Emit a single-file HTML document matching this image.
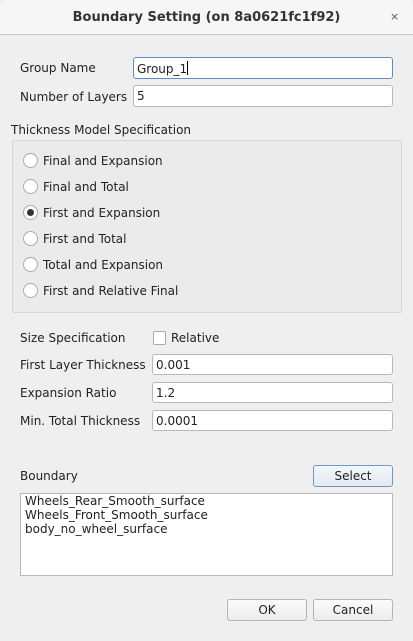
<!DOCTYPE html>
<html><head><style>
*{box-sizing:border-box;margin:0;padding:0}
body{width:413px;height:641px;background:#efefef;font-family:"DejaVu Sans",sans-serif;font-size:12px;color:#222;position:relative;overflow:hidden}
.a{position:absolute;white-space:nowrap}
.tb{position:absolute;left:0;top:0;width:413px;height:35px;background:#f6f6f6;border-bottom:1px solid #c8c8c8;border-radius:6px 6px 0 0}
.in{position:absolute;background:#fff;border:1px solid #b8b8b8;border-radius:3px;padding:3px 3px 1px;line-height:15px}
.rb{position:absolute;left:23px;width:15px;height:15px;border:1px solid #aaa;border-radius:50%;background:#fff}
.bt{position:absolute;border:1px solid #b4b4b4;border-radius:3px;background:linear-gradient(#fbfbfb,#ececec);text-align:center;line-height:21px}
</style></head><body>
<div class="tb"></div>
<div class="a" style="left:0;width:413px;text-align:center;top:10px;font-weight:bold;font-size:13px;color:#333">Boundary Setting (on 8a0621fc1f92)</div>
<div class="a" style="left:390px;top:10px;font-size:11px;color:#555">×</div>

<div class="a" style="left:20px;top:61px">Group Name</div>
<div class="in" style="left:133px;top:57px;width:260px;height:22px;border-color:#5a8fbf">Group_1<span style="display:inline-block;width:1px;height:14px;background:#000;vertical-align:-2px"></span></div>
<div class="a" style="left:20px;top:90px">Number of Layers</div>
<div class="in" style="left:133px;top:85px;width:260px;height:22px">5</div>

<div class="a" style="left:11px;top:123px">Thickness Model Specification</div>
<div style="position:absolute;left:12px;top:140px;width:390px;height:173px;border:1px solid #d6d6d6;border-radius:2px;background:#ebebeb"></div>
<div class="rb" style="top:153px"></div><div class="a" style="left:43px;top:154px">Final and Expansion</div>
<div class="rb" style="top:179px"></div><div class="a" style="left:43px;top:180px">Final and Total</div>
<div class="rb" style="top:205px"><div style="position:absolute;left:3px;top:3px;width:7px;height:7px;border-radius:50%;background:#333"></div></div><div class="a" style="left:43px;top:206px">First and Expansion</div>
<div class="rb" style="top:231px"></div><div class="a" style="left:43px;top:232px">First and Total</div>
<div class="rb" style="top:257px"></div><div class="a" style="left:43px;top:258px">Total and Expansion</div>
<div class="rb" style="top:283px"></div><div class="a" style="left:43px;top:284px">First and Relative Final</div>

<div class="a" style="left:20px;top:331px">Size Specification</div>
<div style="position:absolute;left:153px;top:331px;width:13px;height:14px;border:1px solid #aaa;border-radius:2px;background:#fff"></div>
<div class="a" style="left:171px;top:331px">Relative</div>
<div class="a" style="left:20px;top:358px">First Layer Thickness</div>
<div class="in" style="left:152px;top:354px;width:241px;height:21px">0.001</div>
<div class="a" style="left:20px;top:386px">Expansion Ratio</div>
<div class="in" style="left:152px;top:382px;width:241px;height:21px">1.2</div>
<div class="a" style="left:20px;top:414px">Min. Total Thickness</div>
<div class="in" style="left:152px;top:410px;width:241px;height:21px">0.0001</div>

<div class="a" style="left:20px;top:469px">Boundary</div>
<div class="bt" style="left:313px;top:465px;width:80px;height:22px;border-color:#6f9ac0;background:linear-gradient(#f4f7fa,#e3e9ef)">Select</div>
<div style="position:absolute;left:20px;top:493px;width:373px;height:83px;background:#fff;border:1px solid #b8b8b8;padding:0 4px;line-height:14px">Wheels_Rear_Smooth_surface<br>Wheels_Front_Smooth_surface<br>body_no_wheel_surface</div>

<div class="bt" style="left:227px;top:599px;width:80px;height:22px">OK</div>
<div class="bt" style="left:313px;top:599px;width:80px;height:22px">Cancel</div>
</body></html>
